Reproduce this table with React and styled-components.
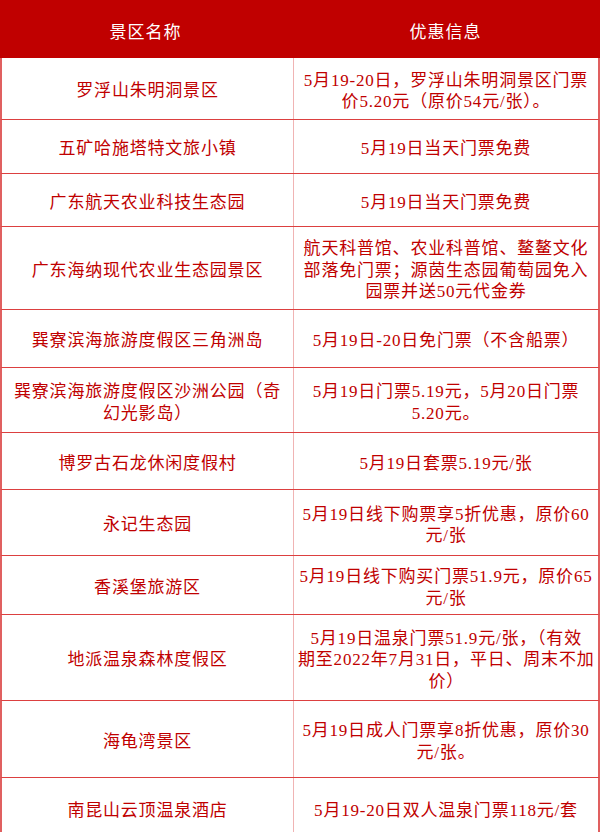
import React from "react";
import styled, { createGlobalStyle } from "styled-components";

const rows = [
  { name: ["罗浮山朱明洞景区"], info: ["5月19-20日，罗浮山朱明洞景区门票", "价5.20元（原价54元/张）。"], h: 62 },
  { name: ["五矿哈施塔特文旅小镇"], info: ["5月19日当天门票免费"], h: 54 },
  { name: ["广东航天农业科技生态园"], info: ["5月19日当天门票免费"], h: 53 },
  { name: ["广东海纳现代农业生态园景区"], info: ["航天科普馆、农业科普馆、鳌鳌文化", "部落免门票；源茵生态园葡萄园免入", "园票并送50元代金券"], h: 83 },
  { name: ["巽寮滨海旅游度假区三角洲岛"], info: ["5月19日-20日免门票（不含船票）"], h: 58 },
  { name: ["巽寮滨海旅游度假区沙洲公园（奇", "幻光影岛）"], info: ["5月19日门票5.19元，5月20日门票", "5.20元。"], h: 65 },
  { name: ["博罗古石龙休闲度假村"], info: ["5月19日套票5.19元/张"], h: 57 },
  { name: ["永记生态园"], info: ["5月19日线下购票享5折优惠，原价60", "元/张"], h: 66 },
  { name: ["香溪堡旅游区"], info: ["5月19日线下购买门票51.9元，原价65", "元/张"], h: 59 },
  { name: ["地派温泉森林度假区"], info: ["5月19日温泉门票51.9元/张，（有效", "期至2022年7月31日，平日、周末不加", "价）"], h: 86 },
  { name: ["海龟湾景区"], info: ["5月19日成人门票享8折优惠，原价30", "元/张。"], h: 77 },
  { name: ["南昆山云顶温泉酒店"], info: ["5月19-20日双人温泉门票118元/套"], h: 62 },
];

const Lines = ({ lines }) =>
  lines.map((line, i) => <Line key={i}>{line}</Line>);

const App = () => {
  return (
    <>
      <GlobalStyle />
      <Table>
        <HeadRow>
          <HeadCell>景区名称</HeadCell>
          <HeadCell>优惠信息</HeadCell>
        </HeadRow>
        {rows.map((row, index) => (
          <Row key={index} $h={row.h}>
            <NameCell>
              <Lines lines={row.name} />
            </NameCell>
            <InfoCell>
              <Lines lines={row.info} />
            </InfoCell>
          </Row>
        ))}
      </Table>
    </>
  );
};

export default App;

const GlobalStyle = createGlobalStyle`
  * {
    box-sizing: border-box;
  }
  body {
    margin: 0;
    background: #ffffff;
    font-family: "Noto Sans CJK SC", "Noto Sans", sans-serif;
  }
`;

const Table = styled.div`
  width: 600px;
  height: 832px;
  overflow: hidden;
  display: flex;
  flex-direction: column;
`;

const HeadRow = styled.div`
  display: grid;
  grid-template-columns: 291px 1fr;
  height: 58px;
  flex-shrink: 0;
  background: #c00000;
`;

const HeadCell = styled.div`
  display: flex;
  align-items: center;
  justify-content: center;
  padding-top: 2px;
  color: #ffffff;
  font-size: 17px;
  letter-spacing: 1px;
`;

const Row = styled.div`
  display: grid;
  grid-template-columns: 291px 1fr;
  height: ${(p) => p.$h}px;
  flex-shrink: 0;
  border-left: 2px solid #e06060;
  border-right: 2px solid #e06060;
  border-bottom: 1.5px solid #dc4040;
`;

const Cell = styled.div`
  display: flex;
  flex-direction: column;
  align-items: center;
  justify-content: center;
  padding-top: 5px;
  text-align: center;
  color: #c00000;
  font-family: "Liberation Serif", "Noto Sans CJK SC", serif;
  font-size: 17px;
  white-space: nowrap;
`;

const Line = styled.span`
  display: block;
  height: 21.5px;
  line-height: 21.5px;
`;

const NameCell = styled(Cell)`
  padding-left: 8px;
  padding-right: 8px;
  letter-spacing: 0.8px;
`;

const InfoCell = styled(Cell)`
  padding-left: 4px;
  padding-right: 4px;
  letter-spacing: 0.8px;
  border-left: 1px solid #f0b4b4;
`;
